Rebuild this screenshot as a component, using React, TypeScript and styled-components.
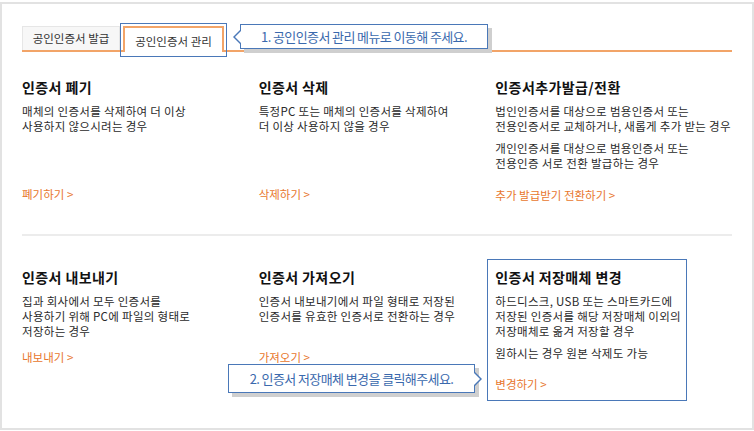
import React from 'react';
import styled, { createGlobalStyle, css } from 'styled-components';

const GlobalStyle = createGlobalStyle`
  html, body {
    margin: 0;
    padding: 0;
    background: #fff;
  }
  body {
    font-family: "Noto Sans CJK KR", "Noto Sans", sans-serif;
    color: #333;
  }
`;

const ORANGE = '#f2a468';
const LINK = '#e8772e';
const BLUE = '#4a78b8';

// Cadre général
const Frame = styled.div`
  position: relative;
  box-sizing: border-box;
  width: 754px;
  height: 428px;
  margin-top: 2px;
  border: 2px solid #e2e2e2;
  padding: 22px 20px 0 20px;
`;

// Onglets
const TabBar = styled.div`
  display: flex;
  align-items: flex-end;
  height: 24px;
  border-bottom: 2px solid ${ORANGE};
`;

const Tab = styled.div<{ $active?: boolean; $width: number }>`
  position: relative;
  box-sizing: border-box;
  width: ${({ $width }) => $width}px;
  height: 24px;
  margin-right: 3px;
  font-size: 11.5px;
  line-height: 23px;
  text-align: center;
  color: #333;
  background: #f7f7f7;
  border: 1px solid #e6e6e6;
  border-bottom: none;

  ${({ $active }) =>
    $active &&
    css`
      height: 26px;
      margin-bottom: -2px;
      line-height: 26px;
      background: #fff;
      border: 2px solid ${ORANGE};
      border-bottom: none;

      &::after {
        content: '';
        position: absolute;
        top: -5px;
        left: -5px;
        right: -5px;
        bottom: -5px;
        border: 1px solid ${BLUE};
      }
    `}
`;

// Sections de cartes
const Section = styled.section<{ $top: number; $bottom: number; $divider?: boolean }>`
  display: grid;
  grid-template-columns: repeat(3, 1fr);
  padding: ${({ $top }) => $top}px 0 ${({ $bottom }) => $bottom}px;
  border-bottom: ${({ $divider }) => ($divider ? '2px solid #ececec' : 'none')};
`;

const Column = styled.div<{ $boxed?: boolean }>`
  position: relative;
  display: flex;
  flex-direction: column;
  align-items: flex-start;

  ${({ $boxed }) =>
    $boxed &&
    css`
      &::after {
        content: '';
        position: absolute;
        top: -9px;
        left: -8px;
        bottom: -9px;
        width: 200px;
        box-sizing: border-box;
        border: 1px solid ${BLUE};
        pointer-events: none;
      }
    `}
`;

const Title = styled.h3`
  margin: 0 0 8px;
  font-size: 14px;
  line-height: 18px;
  font-weight: 700;
  color: #111;
  letter-spacing: 0.4px;
`;

const Desc = styled.div<{ $min: number }>`
  min-height: ${({ $min }) => $min}px;
  font-size: 11.5px;
  line-height: 15px;
  letter-spacing: 0.3px;
  color: #2a2a2a;
  white-space: nowrap;

  p {
    margin: 0;
  }
  p + p {
    margin-top: 7px;
  }
`;

const More = styled.a<{ $gap: number }>`
  margin-top: ${({ $gap }) => $gap}px;
  font-size: 11.5px;
  line-height: 15px;
  color: ${LINK};
  text-decoration: none;
  cursor: pointer;
`;

// Bulles d'aide
const Callout = styled.div<{ $left: number; $top: number; $width: number; $height: number; $arrow: 'left' | 'right' }>`
  position: absolute;
  left: ${({ $left }) => $left}px;
  top: ${({ $top }) => $top}px;
  width: ${({ $width }) => $width}px;
  height: ${({ $height }) => $height}px;
  box-sizing: border-box;
  background: #fff;
  border: 1px solid ${BLUE};
  box-shadow: 4px 4px 0 #cfcfcf;
  font-size: 13px;
  letter-spacing: -0.6px;
  line-height: ${({ $height }) => $height - 2}px;
  text-align: center;
  color: #3a69ad;
  white-space: nowrap;

  &::before,
  &::after {
    content: '';
    position: absolute;
    top: 50%;
    width: 0;
    height: 0;
    border-style: solid;
  }

  ${({ $arrow }) =>
    $arrow === 'left'
      ? css`
          &::before {
            left: -8px;
            margin-top: -8px;
            border-width: 8px 8px 8px 0;
            border-color: transparent ${BLUE} transparent transparent;
          }
          &::after {
            left: -6px;
            margin-top: -7px;
            border-width: 7px 7px 7px 0;
            border-color: transparent #fff transparent transparent;
          }
        `
      : css`
          &::before {
            right: -8px;
            margin-top: -8px;
            border-width: 8px 0 8px 8px;
            border-color: transparent transparent transparent ${BLUE};
          }
          &::after {
            right: -6px;
            margin-top: -7px;
            border-width: 7px 0 7px 7px;
            border-color: transparent transparent transparent #fff;
          }
        `}
`;

type Card = {
  title: string;
  paras: string[][];
  link: string;
  gap: number;
  boxed?: boolean;
};

const topCards: Card[] = [
  {
    title: '인증서 폐기',
    paras: [['매체의 인증서를 삭제하여 더 이상', '사용하지 않으시려는 경우']],
    link: '폐기하기 >',
    gap: 17,
  },
  {
    title: '인증서 삭제',
    paras: [['특정PC 또는 매체의 인증서를 삭제하여', '더 이상 사용하지 않을 경우']],
    link: '삭제하기 >',
    gap: 17,
  },
  {
    title: '인증서추가발급/전환',
    paras: [
      ['법인인증서를 대상으로 범용인증서 또는', '전용인증서로 교체하거나, 새롭게 추가 받는 경우'],
      ['개인인증서를 대상으로 범용인증서 또는', '전용인증 서로 전환 발급하는 경우'],
    ],
    link: '추가 발급받기 전환하기 >',
    gap: 17,
  },
];

const bottomCards: Card[] = [
  {
    title: '인증서 내보내기',
    paras: [['집과 회사에서 모두 인증서를', '사용하기 위해 PC에 파일의 형태로', '저장하는 경우']],
    link: '내보내기 >',
    gap: 11,
  },
  {
    title: '인증서 가져오기',
    paras: [['인증서 내보내기에서 파일 형태로 저장된', '인증서를 유효한 인증서로 전환하는 경우']],
    link: '가져오기 >',
    gap: 11,
  },
  {
    title: '인증서 저장매체 변경',
    paras: [
      ['하드디스크, USB 또는 스마트카드에', '저장된 인증서를 해당 저장매체 이외의', '저장매체로 옮겨 저장할 경우'],
      ['원하시는 경우 원본 삭제도 가능'],
    ],
    link: '변경하기 >',
    gap: 16,
    boxed: true,
  },
];

function CardColumn({ card, min }: { card: Card; min: number }) {
  return (
    <Column $boxed={card.boxed}>
      <Title>{card.title}</Title>
      <Desc $min={min}>
        {card.paras.map((lines, i) => (
          <p key={i}>
            {lines.map((l, j) => (
              <React.Fragment key={j}>
                {l}
                {j < lines.length - 1 && <br />}
              </React.Fragment>
            ))}
          </p>
        ))}
      </Desc>
      <More $gap={card.gap}>{card.link}</More>
    </Column>
  );
}

export default function App() {
  return (
    <>
      <GlobalStyle />
      <Frame>
        <TabBar>
          <Tab $width={98}>공인인증서 발급</Tab>
          <Tab $width={101} $active>
            공인인증서 관리
          </Tab>
        </TabBar>

        <Section $top={26} $bottom={31} $divider>
          {topCards.map((c) => (
            <CardColumn key={c.title} card={c} min={66} />
          ))}
        </Section>

        <Section $top={32} $bottom={0}>
          {bottomCards.map((c) => (
            <CardColumn key={c.title} card={c} min={45} />
          ))}
        </Section>

        <Callout $left={238} $top={20} $width={248} $height={25} $arrow="left">
          1. 공인인증서 관리 메뉴로 이동해 주세요.
        </Callout>
        <Callout $left={226} $top={360} $width={247} $height={29} $arrow="right">
          2. 인증서 저장매체 변경을 클릭해주세요.
        </Callout>
      </Frame>
    </>
  );
}
